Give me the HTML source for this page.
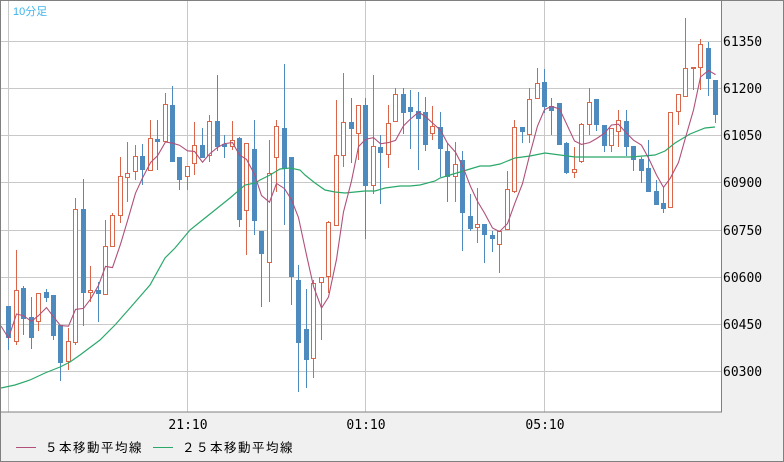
<!DOCTYPE html>
<html><head><meta charset="utf-8"><style>
html,body{margin:0;padding:0;background:#f0f0f0;}
body{width:784px;height:462px;position:relative;overflow:hidden;font-family:"Liberation Sans","Noto Sans CJK JP",sans-serif;}
</style></head><body>
<svg id="s" width="784" height="462" xmlns="http://www.w3.org/2000/svg" style="position:absolute;left:0;top:0">
<rect x="0" y="0" width="784" height="462" fill="#f0f0f0"/>
<rect x="0.5" y="0.5" width="783" height="461" fill="none" stroke="#808080"/>
<rect x="1" y="1" width="720" height="411" fill="#fff"/>
<g stroke="#c8c8c8" stroke-width="1">
<line x1="1" y1="41.5" x2="721" y2="41.5"/><line x1="1" y1="88.5" x2="721" y2="88.5"/>
<line x1="1" y1="135.5" x2="721" y2="135.5"/><line x1="1" y1="182.5" x2="721" y2="182.5"/>
<line x1="1" y1="230.5" x2="721" y2="230.5"/><line x1="1" y1="277.5" x2="721" y2="277.5"/>
<line x1="1" y1="324.5" x2="721" y2="324.5"/><line x1="1" y1="371.5" x2="721" y2="371.5"/>
<line x1="8.5" y1="1" x2="8.5" y2="412"/><line x1="187.5" y1="1" x2="187.5" y2="412"/>
<line x1="365.5" y1="1" x2="365.5" y2="412"/><line x1="544.5" y1="1" x2="544.5" y2="412"/>
</g>
<g id="c"></g>
<polyline fill="none" stroke="#2aa86a" stroke-width="1.2" points="1,388 15,385 30,380 45,373 60,367 70,362 80,355 100,340 115,325 130,308 150,285 165,258 175,248 190,230 200,222 215,210 230,198 245,185 255,183 260,180 270,175 280,169 290,168 300,170 305,175 315,183 325,190 335,192 345,193 355,192 365,191 375,191 385,188 400,186 410,186 420,185 435,181 440,178 450,175 460,172 470,169 480,166 490,166 500,164 505,162 515,158 530,156 545,153 560,155 575,157 600,157 630,157 655,155 665,151 675,143 690,134 705,128 715,127"/>
<polyline id="m5" fill="none" stroke="#b0507a" stroke-width="1.1" points=""/>
<rect x="0.5" y="0.5" width="721" height="411.5" fill="none" stroke="#808080"/>
<g font-size="13" fill="#000" font-family="DejaVu Sans Mono, Liberation Mono, monospace">
<text x="723" y="46">61350</text><text x="723" y="93">61200</text><text x="723" y="140">61050</text>
<text x="723" y="187">60900</text><text x="723" y="235">60750</text><text x="723" y="282">60600</text>
<text x="723" y="329">60450</text><text x="723" y="376">60300</text>
<text x="188" y="429" text-anchor="middle">21:10</text>
<text x="366" y="429" text-anchor="middle">01:10</text>
<text x="545" y="429" text-anchor="middle">05:10</text>
</g>
<text x="13" y="15" font-size="11" fill="#3fb4ec">10分足</text>
<line x1="16" y1="447.5" x2="36" y2="447.5" stroke="#b0507a"/>
<text x="45" y="452" font-size="12.5" fill="#000" letter-spacing="1.5">５本移動平均線</text>
<line x1="153" y1="447.5" x2="173" y2="447.5" stroke="#2aa86a"/>
<text x="182" y="452" font-size="12.5" fill="#000" letter-spacing="1.5">２５本移動平均線</text>
</svg>
<script>
var d=[
['b',306,338,306,350],['r',290,342,250,345],['b',288,319,286,335],['b',317,338,297,349],['r',293,322,293,331],
['b',292,298,289,302],['b',295,336,295,340],['b',325,363,325,381],['r',341,362,328,370],['r',209,343,198,345],
['b',209,293,179,326],['r',290,293,266,302],['b',290,294,282,322],['r',246,295,220,295],['r',215,247,213,247],
['r',176,216,157,223],['r',173,178,142,202],['r',156,172,145,180],['b',156,170,144,185],['r',138,171,120,171],
['b',139,142,120,170],['r',104,142,93,142],['b',105,162,86,162],['b',157,180,157,190],['r',166,177,166,190],
['r',145,164,122,175],['b',145,158,128,158],['r',121,156,115,162],['b',121,147,75,151],['b',144,147,135,158],
['r',140,147,121,150],['b',138,220,137,227],['r',143,211,143,255],['b',149,221,120,235],['b',231,254,231,307],
['r',173,263,140,302],['r',126,158,120,192],['b',128,169,64,225],['b',157,277,157,305],['b',280,343,265,392],
['b',329,360,289,388],['r',283,359,280,378],['r',277,283,277,340],['r',222,277,221,293],['r',155,226,100,226],
['r',122,156,73,167],['b',122,129,98,163],['r',105,134,105,160],['b',105,186,98,239],['r',146,186,75,194],
['b',147,153,135,204],['r',123,155,105,168],['r',94,122,88,122],['b',94,113,88,134],['b',107,112,90,149],
['b',111,119,92,170],['b',112,145,97,151],['r',126,134,106,140],['b',127,149,112,177],['b',151,177,143,202],
['r',164,177,142,202],['b',160,213,151,251],['b',216,229,194,231],['r',224,228,188,243],['b',224,235,224,263],
['b',235,239,231,252],['r',231,245,231,273],['r',189,230,171,230],['r',127,192,120,193],['b',127,132,127,143],
['r',99,135,88,143],['r',83,99,68,99],['b',82,107,69,113],['b',106,111,98,135],['b',103,145,103,145],
['b',143,173,142,174],['r',169,173,147,178],['r',124,162,123,163],['r',102,125,88,135],['b',99,125,99,131],
['b',125,146,125,152],['r',128,146,128,152],['r',120,132,110,147],['b',121,147,110,156],['b',146,160,146,171],
['b',159,171,157,183],['b',168,192,140,192],['b',191,205,180,205],['b',203,209,187,213],['r',112,208,112,208],
['r',94,112,94,125],['r',68,97,18,97],['r',67,68,67,90],['r',44,68,39,90],['b',48,79,42,96],['b',80,115,80,123]];
var g=document.getElementById('c'),h='',cl=[],pts=[];
d.forEach(function(k,i){
 var x=Math.round(8.3+i*7.44);
 var col=k[0]=='r'?'#d9664a':'#4d8bbf';
 h+='<line x1="'+(x+0.5)+'" y1="'+k[3]+'" x2="'+(x+0.5)+'" y2="'+k[4]+'" stroke="'+col+'" stroke-width="1"/>';
 var hh=Math.max(k[2]-k[1],2);
 if(k[0]=='r') h+='<rect x="'+(x-1.5)+'" y="'+(k[1]+0.5)+'" width="4" height="'+(hh-1)+'" fill="#fff" stroke="'+col+'" stroke-width="1"/>';
 else h+='<rect x="'+(x-2)+'" y="'+k[1]+'" width="5" height="'+hh+'" fill="'+col+'"/>';
 cl.push(k[0]=='r'?k[1]:k[2]);
 var n=Math.min(5,cl.length),s=0;for(var j=cl.length-n;j<cl.length;j++)s+=cl[j];
 pts.push((x+0.5)+','+(s/n).toFixed(1));
});
g.innerHTML=h;
document.getElementById('m5').setAttribute('points','1,326 '+pts.join(' '));
</script>
</body></html>
